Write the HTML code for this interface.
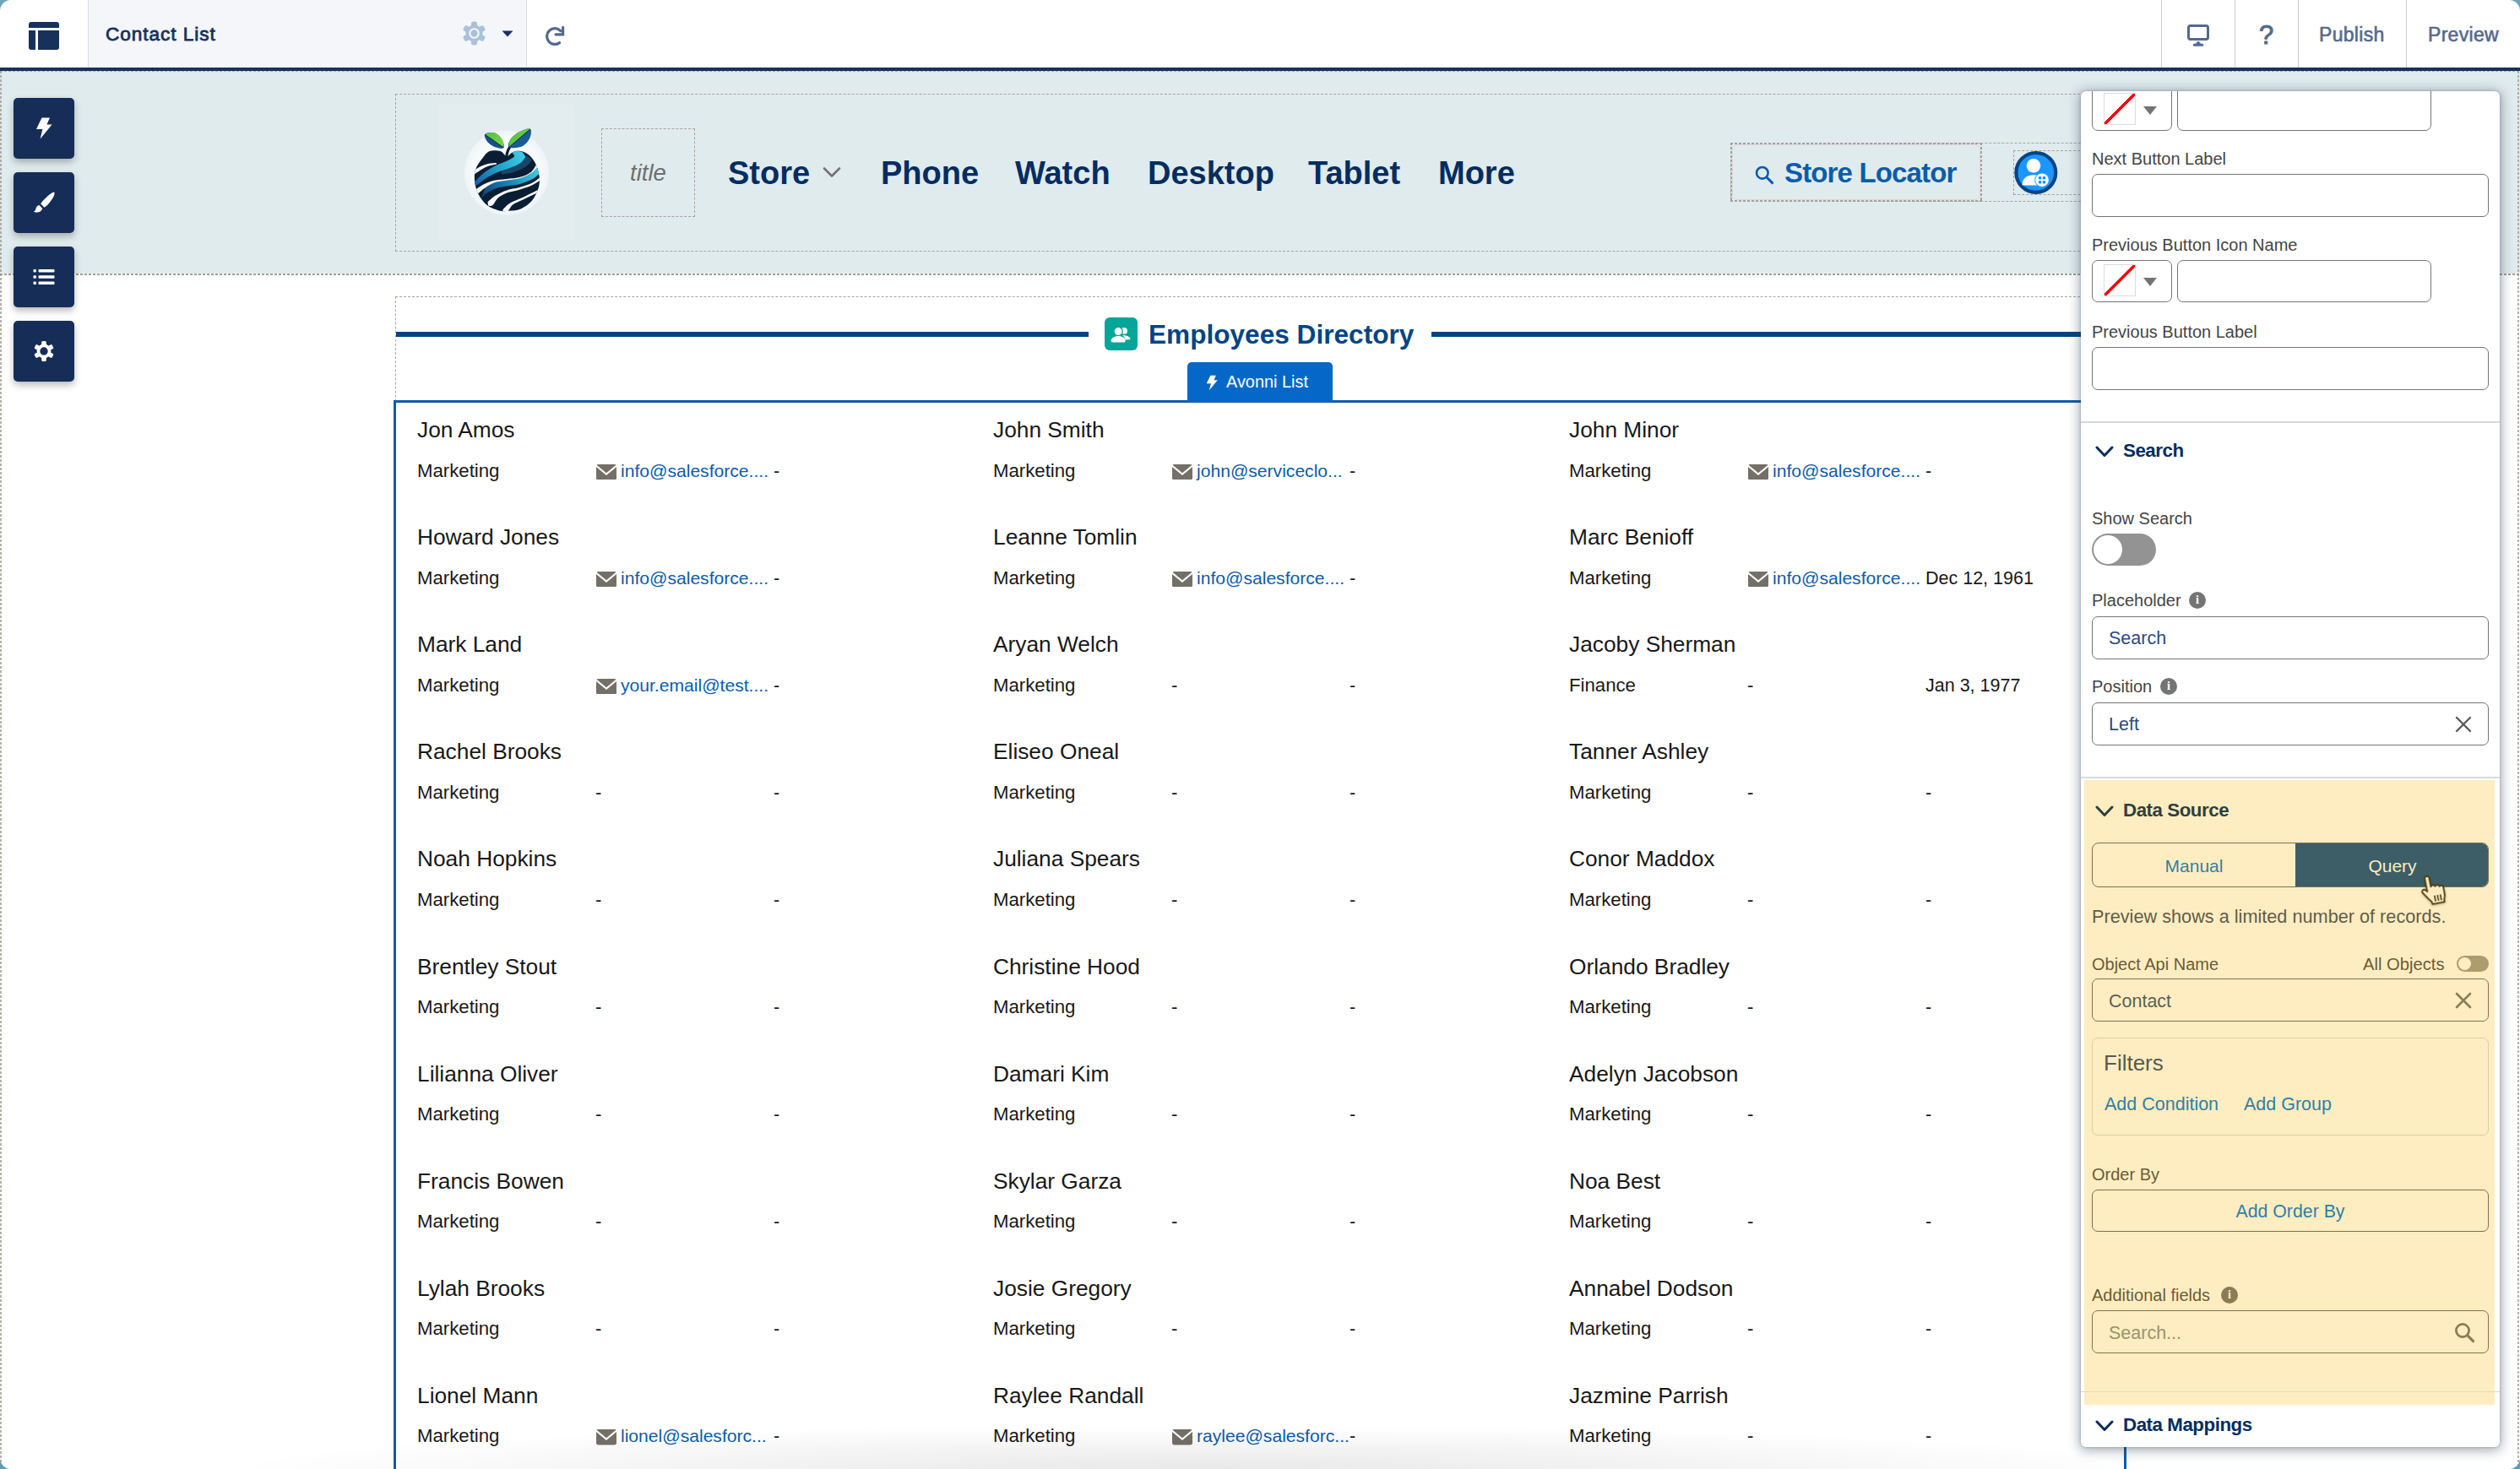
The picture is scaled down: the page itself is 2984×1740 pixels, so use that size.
<!DOCTYPE html>
<html lang="en">
<head>
<meta charset="utf-8">
<title>Contact List</title>
<style>
*{box-sizing:border-box;margin:0;padding:0}
html,body{width:2984px;height:1740px;overflow:hidden;background:#fff}
body{position:relative;font-family:"Liberation Sans",Arial,sans-serif;color:#181818}
.abs{position:absolute}
svg{display:block}
/* top bar */
#top{position:absolute;left:0;top:0;width:2984px;height:80px;background:#fff}
#topline{position:absolute;left:0;top:80px;width:2984px;height:4px;background:#16325c}
#top .cell{position:absolute;top:0;height:80px}
#ttl{left:104px;width:520px;background:#f4f6f9;border-left:1px solid #d8dde6;border-right:1px solid #d8dde6}
#ttl span{position:absolute;left:20px;top:1px;line-height:80px;font-size:22.600px;letter-spacing:.95px;color:#16325c;-webkit-text-stroke:.8px #16325c}
.tsep{position:absolute;top:0;width:1px;height:80px;background:#cbcbcb}
.tbtn{position:absolute;top:1px;line-height:80px;font-size:23px;letter-spacing:.3px;color:#54698d;-webkit-text-stroke:.6px #54698d}
/* band */
#band{position:absolute;left:0;top:84px;width:2984px;height:240px;background:#e0ebee}
.hd{position:absolute;height:2px;background:repeating-linear-gradient(to right,#a39d94 0 3px,transparent 3px 5px)}
.vd{position:absolute;opacity:.8;width:1.5px;background:repeating-linear-gradient(to bottom,#a39d94 0 3px,transparent 3px 5px)}
.dash{position:absolute;border:1px dashed #aaa39b}
.nav{position:absolute;top:0;font-weight:bold;font-size:38px;color:#032d60;line-height:46px;white-space:nowrap}
/* sidebar */
.sb{position:absolute;left:16px;width:72px;height:72px;border-radius:5px;background:#162d58;box-shadow:0 4px 8px rgba(0,0,0,.28)}
.sb svg{position:absolute}
/* list */
#list{position:absolute;left:466px;top:474px;width:2052px;height:1290px;border:3px solid #0b5cab;background:#fff}
.nm{position:absolute;font-size:26.3px;line-height:34px;color:#181818;white-space:nowrap}
.f{position:absolute;font-size:22.2px;line-height:30px;color:#181818;white-space:nowrap}
.f a{color:#0b5cab;text-decoration:none;font-size:21.1px}
.f svg{position:absolute;left:1px;top:7px}
.f.m a{position:absolute;left:30px;top:0}
.f.d{font-size:21.5px}
#panel{position:absolute;left:2464px;top:108px;width:496px;height:1606px;background:#fff;border-radius:6px;box-shadow:0 2px 14px 2px rgba(40,60,80,.42),0 0 3px rgba(40,60,80,.35);overflow:hidden}
#panel .lbl{position:absolute;left:13px;font-size:20px;line-height:24px;color:#444;white-space:nowrap}
#panel .inp{position:absolute;left:13px;width:470px;height:51px;border:1px solid #747474;border-radius:7px;background:#fff;font-size:21.500px;line-height:51px;padding-left:19px;color:#2e4a80;white-space:nowrap}
#panel .pick{position:absolute;left:13px;width:95px;height:50px;border:1px solid #747474;border-radius:7px;background:#fff}
#panel .pick i{position:absolute;left:12.500px;top:4px;width:38px;height:38px;border:1px solid #dcdcdc;background:linear-gradient(to bottom right,#fff calc(50% - 2px),#f00 calc(50% - 1.500px),#f00 calc(50% + 1.500px),#fff calc(50% + 2px))}
#panel .pick b{position:absolute;left:60px;top:19.500px;width:0;height:0;border-left:8.500px solid transparent;border-right:8.500px solid transparent;border-top:10px solid #747474}
#panel .hr{position:absolute;left:0;width:496px;height:1.500px;background:#d3d9e0}
#panel .sec{position:absolute;left:50px;font-weight:bold;font-size:22.300px;letter-spacing:-.45px;line-height:26px;color:#032d60;white-space:nowrap}
#panel .chev{position:absolute;left:17px}
#panel .info{position:absolute;width:20px;height:20px;border-radius:50%;background:#747474;color:#fff;font:bold 14px/20px "Liberation Serif",serif;text-align:center}
#ylw{position:absolute;left:4px;top:816px;width:486px;height:740px;background:#ffedc2}
#panel .y.lbl{color:#6b5c35}
#panel .y.inp{background:transparent;border-color:#7f7350;color:#5c5f52}
#panel .lnk{position:absolute;font-size:21.500px;line-height:26px;color:#3080a4;white-space:nowrap}
</style>
</head>
<body>
<!-- ===== TOP BAR ===== -->
<div id="top">
  <svg class="abs" style="left:34px;top:26px" width="36" height="33" viewBox="0 0 36 33"><path fill="#16325c" d="M3 0h30a3 3 0 0 1 3 3v4H0V3a3 3 0 0 1 3-3zM0 10h8v23H3a3 3 0 0 1-3-3zM11 10h25v20a3 3 0 0 1-3 3H11z"/></svg>
  <div id="ttl" class="cell"><span>Contact List</span>
    <svg class="abs" style="left:441.500px;top:25px" width="29" height="29" viewBox="-15 -15 30 30"><g fill="#abc1d9"><circle r="10.4"/><g id="tth"><rect x="-3.6" y="-14.4" width="7.2" height="7" rx="2.2"/></g><use href="#tth" transform="rotate(60)"/><use href="#tth" transform="rotate(120)"/><use href="#tth" transform="rotate(180)"/><use href="#tth" transform="rotate(240)"/><use href="#tth" transform="rotate(300)"/></g><circle r="5.4" fill="none" stroke="#f4f6f9" stroke-width="2.2"/></svg>
    <svg class="abs" style="left:489px;top:36px" width="14" height="8" viewBox="0 0 14 8"><path fill="#16325c" d="M0.5 0.6h13L7 7.4z"/></svg>
  </div>
  <svg class="abs" style="left:644px;top:30px" width="26" height="26" viewBox="0 0 26 26"><path fill="none" stroke="#54698d" stroke-width="3.2" stroke-linecap="round" d="M18.6 20.6A9.4 9.4 0 1 1 19.8 6.6"/><path fill="none" stroke="#54698d" stroke-width="3.2" stroke-linecap="round" stroke-linejoin="miter" d="M22.6 2.4v8.4h-8.6"/></svg>
  <div class="tsep" style="left:2559px"></div>
  <div class="tsep" style="left:2646px"></div>
  <div class="tsep" style="left:2721px"></div>
  <div class="tsep" style="left:2849px"></div>
  <svg class="abs" style="left:2589px;top:28px" width="28" height="28" viewBox="0 0 28 28"><rect x="2.500" y="2.500" width="23" height="16" rx="2.200" fill="none" stroke="#54698d" stroke-width="3"/><path fill="#54698d" d="M14 20.500l3.200 3.200h1.600a1.500 1.500 0 0 1 0 3H9.200a1.500 1.500 0 0 1 0-3h1.600z"/></svg>
  <div class="tbtn" style="left:2675px;top:2px;font-size:31px;letter-spacing:0;-webkit-text-stroke:1px #54698d">?</div>
  <div class="tbtn" style="left:2746px">Publish</div>
  <div class="tbtn" style="left:2875px">Preview</div>
</div>
<div id="topline"></div>
<div class="abs" style="left:0;top:0;width:13px;height:13px;background:radial-gradient(circle at 13px 13px,rgba(111,165,184,0) 12.500px,#6fa5b8 13.500px)"></div>
<div class="abs" style="left:2971px;top:0;width:13px;height:13px;background:radial-gradient(circle at 0 13px,rgba(111,165,184,0) 12.500px,#6fa5b8 13.500px)"></div>
<div class="abs" style="left:0;top:1727px;width:13px;height:13px;z-index:9;background:radial-gradient(circle at 13px 0,rgba(111,165,184,0) 12.500px,#5f9ab0 13.500px)"></div>
<div class="abs" style="left:2971px;top:1727px;width:13px;height:13px;z-index:9;background:radial-gradient(circle at 0 0,rgba(111,165,184,0) 12.500px,#5f9ab0 13.500px)"></div>

<!-- ===== HEADER BAND ===== -->
<div id="band"></div>
<div class="hd" style="left:0;top:324px;width:2984px"></div>
<div class="hd" style="left:0;top:84px;width:2984px;height:1px;opacity:.8"></div>
<div class="vd" style="left:0;top:84px;height:1656px"></div>
<div class="vd" style="left:2981px;top:84px;height:1656px"></div>
<div class="dash" style="left:468px;top:111px;width:2050px;height:187px"></div>
<div class="abs" style="left:520px;top:124px;width:160px;height:160px;background:#e3edf0"></div>
<svg class="abs" style="left:510px;top:115px" width="180" height="180" viewBox="0 0 180 180">
<defs><radialGradient id="glow"><stop offset="0" stop-color="#ffffff"/><stop offset=".82" stop-color="#f5fafc"/><stop offset="1" stop-color="#eef5f7"/></radialGradient>
<clipPath id="apc"><path d="M89.91 70.04C87.66 69.73 85.80 65.06 82.43 64.06C79.06 63.06 73.26 62.63 69.7 64.06C66.14 65.49 63.84 69.10 61.09 72.66C58.34 76.22 54.73 80.90 53.23 85.39C51.73 89.88 51.61 94.75 52.11 99.61C52.61 104.47 53.80 109.84 56.23 114.58C58.66 119.32 62.59 124.74 66.71 128.05C70.83 131.36 76.56 133.30 80.93 134.42C85.30 135.54 88.53 135.16 92.9 134.79C97.27 134.41 102.64 134.17 107.13 132.17C111.62 130.17 116.48 126.74 119.85 122.81C123.22 118.88 125.84 113.08 127.34 108.59C128.84 104.10 129.14 100.36 128.83 95.87C128.52 91.38 127.08 85.77 125.46 81.65C123.84 77.53 121.53 73.92 119.1 71.17C116.67 68.42 113.74 66.43 110.87 65.18C108.00 63.93 104.39 63.55 101.89 63.68C99.39 63.80 97.90 64.87 95.9 65.93C93.90 66.99 92.16 70.35 89.91 70.04Z"/></clipPath>
<linearGradient id="bl" gradientUnits="userSpaceOnUse" x1="52" y1="105" x2="112" y2="66"><stop offset="0" stop-color="#185a9e"/><stop offset=".45" stop-color="#1f9cc8"/><stop offset="1" stop-color="#3fd2e6"/></linearGradient>
<linearGradient id="bl2" gradientUnits="userSpaceOnUse" x1="60" y1="118" x2="128" y2="86"><stop offset="0" stop-color="#0f3f78"/><stop offset=".5" stop-color="#1a86b8"/><stop offset="1" stop-color="#35cfe4"/></linearGradient>
<linearGradient id="lfg" x1="0" y1="0" x2="1" y2="1"><stop offset="0" stop-color="#49b848"/><stop offset="1" stop-color="#7ad640"/></linearGradient>
<clipPath id="lLc"><path d="M64.09 44.22C65.34 42.41 71.63 41.48 74.94 42.35C78.25 43.22 81.99 46.53 83.92 49.46C85.85 52.39 87.79 58.32 86.54 59.94C85.29 61.56 79.62 60.31 76.44 59.19C73.26 58.07 69.52 55.70 67.46 53.2C65.40 50.71 62.84 46.03 64.09 44.22Z"/></clipPath><clipPath id="lRc"><path d="M117.98 37.86C119.98 39.23 118.67 45.97 116.86 49.46C115.05 52.95 111.12 57.20 107.13 58.82C103.14 60.44 95.02 60.62 92.9 59.19C90.78 57.75 92.40 53.20 94.4 50.21C96.40 47.22 100.95 43.29 104.88 41.23C108.81 39.17 115.98 36.49 117.98 37.86Z"/></clipPath></defs>
<circle cx="90" cy="89.5" r="50" fill="url(#glow)"/>
<g clip-path="url(#apc)"><rect x="40" y="50" width="100" height="100" fill="#0a1e33"/>
<path d="M83.92 82.4C86.17 81.65 93.16 79.65 97.4 77.9C101.64 76.15 106.50 73.42 109.37 71.92C112.24 70.42 113.74 69.42 114.61 68.92L119.85 74.91C118.60 76.16 116.11 80.03 112.37 82.4C108.63 84.77 102.14 87.63 97.4 89.13C92.66 90.63 86.17 91.00 83.92 91.38Z" fill="#1d4f78" opacity=".8"/>
<path d="M52.11 99.99C54.04 98.18 59.53 92.31 63.71 89.13C67.89 85.95 72.82 83.15 77.19 80.9C81.56 78.66 86.29 77.41 89.91 75.66C93.53 73.91 97.77 72.11 98.89 70.42C100.01 68.73 96.15 66.65 96.65 65.55C97.15 64.45 99.89 63.89 101.89 63.83C103.89 63.77 107.50 64.96 108.62 65.18L112.37 70.42C111.37 71.67 109.50 75.66 106.38 77.9C103.26 80.15 98.27 82.02 93.65 83.89C89.03 85.76 83.30 87.13 78.68 89.13C74.06 91.13 69.70 93.50 65.96 95.87C62.22 98.24 58.54 101.85 56.23 103.35C53.92 104.85 52.80 104.60 52.11 104.85Z" fill="url(#bl)"/>
<path d="M50.99 86.89C52.49 86.02 56.98 83.02 59.97 81.65C62.96 80.28 65.96 79.28 68.95 78.65C71.94 78.03 76.43 78.03 77.93 77.9L77.93 79.4C76.56 79.71 72.44 80.33 69.7 81.27C66.96 82.20 64.46 83.33 61.47 85.01C58.48 86.70 53.36 90.32 51.74 91.38Z" fill="#f7fbfc"/>
<path d="M64.46 107.47C66.46 106.41 72.20 102.57 76.44 101.11C80.68 99.65 85.17 99.48 89.91 98.71C94.65 97.94 100.02 97.88 104.88 96.47C109.74 95.06 115.42 92.59 119.1 90.25C122.78 87.91 125.65 83.71 126.96 82.4L128.83 90.63C127.33 91.75 123.84 95.25 119.85 97.37C115.86 99.49 109.87 101.98 104.88 103.35C99.89 104.72 94.28 104.85 89.91 105.6C85.54 106.35 82.42 106.59 78.68 107.84C74.94 109.09 70.58 111.08 67.46 113.08C64.34 115.08 61.22 118.70 59.97 119.82Z" fill="url(#bl2)"/>
<path d="M50.99 111.59C52.74 110.34 57.48 106.22 61.47 104.1C65.46 101.98 70.20 100.05 74.94 98.86C79.68 97.67 84.92 97.61 89.91 96.99C94.90 96.37 100.14 96.43 104.88 95.12C109.62 93.81 114.92 91.75 118.35 89.13C121.78 86.51 124.27 81.02 125.46 79.4L126.96 82.4C125.65 83.71 122.78 87.91 119.1 90.25C115.42 92.59 109.74 95.06 104.88 96.47C100.02 97.88 94.65 97.94 89.91 98.71C85.17 99.48 80.68 99.65 76.44 101.11C72.20 102.57 68.33 104.85 64.46 107.47C60.59 110.09 55.10 115.27 53.23 116.83Z" fill="#f7fbfc"/>
<path d="M67.46 124.31C68.96 123.06 72.70 119.14 76.44 116.83C80.18 114.52 85.17 112.08 89.91 110.46C94.65 108.84 99.89 108.53 104.88 107.1C109.87 105.67 115.73 103.86 119.85 101.86C123.97 99.86 127.96 96.24 129.58 95.12L129.96 98.49C128.28 99.49 124.03 102.61 119.85 104.48C115.67 106.35 109.62 108.29 104.88 109.72C100.14 111.15 95.53 111.52 91.41 113.08C87.29 114.64 83.18 116.57 80.18 119.07C77.19 121.56 75.44 126.43 73.44 128.05C71.44 129.67 69.07 128.68 68.2 128.8Z" fill="#f7fbfc"/>
<path d="M85.42 133.29C86.79 132.04 89.78 128.18 93.65 125.81C97.52 123.44 103.01 121.75 108.62 119.07C114.23 116.39 124.22 111.28 127.34 109.72L127.34 112.71C124.34 114.17 114.36 119.04 109.37 121.47C104.38 123.90 100.52 124.84 97.4 127.31C94.28 129.78 92.66 134.79 90.66 136.29C88.66 137.79 86.29 136.29 85.42 136.29Z" fill="#f7fbfc"/>
</g>
<path d="M89.91 69.67Q90.66 62.19 96.65 55.07" fill="none" stroke="#0a1e33" stroke-width="3.2" stroke-linecap="round"/>
<g clip-path="url(#lLc)"><rect x="60" y="35" width="40" height="30" fill="#17508a"/><path d="M64.09 44.22L86.54 59.94L86.54 30L64.09 30Z" fill="url(#lfg)"/><path d="M64.09 44.22L86.54 59.94" stroke="#0a1e33" stroke-width=".9"/></g>
<g clip-path="url(#lRc)"><rect x="90" y="35" width="35" height="30" fill="#1a5a95"/><path d="M117.98 37.86L92.9 59.19L92.9 30Z" fill="url(#lfg)"/><path d="M117.98 37.86L92.9 59.19" stroke="#0a1e33" stroke-width=".9"/></g>
</svg>
<div class="dash" style="left:712px;top:152px;width:111px;height:105px"></div>
<div class="abs" style="left:712px;top:152px;width:111px;height:105px;line-height:105px;text-align:center;font-style:italic;font-size:27.500px;color:#706e6b">title</div>
<div class="nav" style="left:862px;top:182px">Store</div>
<svg class="abs" style="left:974px;top:197px" width="22" height="14" viewBox="0 0 22 14"><path d="M2 2.500l9 9 9-9" fill="none" stroke="#747474" stroke-width="2.600" stroke-linecap="round" stroke-linejoin="round"/></svg>
<div class="nav" style="left:1043px;top:182px">Phone</div>
<div class="nav" style="left:1202px;top:182px">Watch</div>
<div class="nav" style="left:1359px;top:182px">Desktop</div>
<div class="nav" style="left:1549px;top:182px">Tablet</div>
<div class="nav" style="left:1703px;top:182px">More</div>
<div class="dash" style="left:2049px;top:169px;width:470px;height:70px"></div>
<div class="abs" style="left:2049px;top:169px;width:298px;height:70px;background:repeating-linear-gradient(to right,#a8a199 0 3px,transparent 3px 5px) top/100% 2px no-repeat,repeating-linear-gradient(to right,#a8a199 0 3px,transparent 3px 5px) bottom/100% 2px no-repeat,repeating-linear-gradient(to bottom,#a8a199 0 3px,transparent 3px 5px) left/2px 100% no-repeat,repeating-linear-gradient(to bottom,#a8a199 0 3px,transparent 3px 5px) right/2px 100% no-repeat"></div>
<div class="abs" style="left:2051px;top:171px;width:294px;height:66px;border:1px solid #dcd6d5;border-radius:7px"></div>
<div class="dash" style="left:2384px;top:178px;width:120px;height:53px"></div>
<svg class="abs" style="left:2078px;top:196px" width="24" height="24" viewBox="0 0 24 24"><circle cx="8.800" cy="8.800" r="6.800" fill="none" stroke="#0b5cab" stroke-width="2.600"/><path d="M13.800 13.800l6.800 6.800" stroke="#0b5cab" stroke-width="3" stroke-linecap="round"/></svg>
<div class="abs" style="left:2113px;top:185px;font-weight:bold;font-size:33px;letter-spacing:-.85px;line-height:40px;color:#0b5cab;white-space:nowrap">Store Locator</div>
<svg class="abs" style="left:2384px;top:178px" width="54" height="54" viewBox="0 0 54 54"><circle cx="26.800" cy="26.400" r="23.400" fill="#1b96ff" stroke="#014486" stroke-width="4.200"/><circle cx="24" cy="18.300" r="8.300" fill="#fff"/><path d="M10.500 41.500c0-8.500 5.500-12.300 13.500-12.300 4 0 7.500 1 10 3v9.300z" fill="#fff"/><circle cx="34" cy="35.200" r="8.300" fill="#fff" stroke="#1b96ff" stroke-width="1"/><g fill="#1b96ff"><rect x="29.800" y="31" width="3.500" height="3.500" rx="1"/><rect x="34.700" y="31" width="3.500" height="3.500" rx="1"/><rect x="29.800" y="35.900" width="3.500" height="3.500" rx="1"/><rect x="34.700" y="35.900" width="3.500" height="3.500" rx="1"/></g></svg>

<!-- ===== SIDEBAR ===== -->
<div class="sb" style="top:116px"><svg style="left:26px;top:23px" width="20" height="26" viewBox="0 0 20 26"><path fill="#fff" d="M7.500 0.500h9.500l-3.600 8h6.200L5.600 25.500 8.400 14H1z"/></svg></div>
<div class="sb" style="top:204px"><svg style="left:22px;top:22px" width="28" height="28" viewBox="0 0 28 28"><path fill="#fff" d="M26 1.600c1 .8.600 3-.600 5.400C22.600 12.400 17 18.600 14.600 19.800l-4.400-4.400C12.600 11.600 19 5 24.400 2c.7-.400 1.200-.600 1.600-.400zM8.400 17l3.800 3.800c-.4 2.600-2.600 4.600-5.600 4.800-1.800.2-3.800-.2-5-.8 1.600-.6 2.400-1.400 2.800-3.200.4-2.200 1.800-4.200 4-4.600z"/></svg></div>
<div class="sb" style="top:292px"><svg style="left:23px;top:26px" width="26" height="20" viewBox="0 0 26 20"><g fill="#fff"><rect x="0.500" y="1" width="3.400" height="3.400" rx=".8"/><rect x="6.500" y="1" width="19" height="3.400" rx=".8"/><rect x="0.500" y="8.300" width="3.400" height="3.400" rx=".8"/><rect x="6.500" y="8.300" width="19" height="3.400" rx=".8"/><rect x="0.500" y="15.600" width="3.400" height="3.400" rx=".8"/><rect x="6.500" y="15.600" width="19" height="3.400" rx=".8"/></g></svg></div>
<div class="sb" style="top:380px"><svg style="left:23px;top:23px" width="26" height="26" viewBox="-13 -13 26 26"><g fill="#fff"><circle r="8.400"/><g id="tt2"><rect x="-2.800" y="-12" width="5.600" height="6" rx="1.600"/></g><use href="#tt2" transform="rotate(60)"/><use href="#tt2" transform="rotate(120)"/><use href="#tt2" transform="rotate(180)"/><use href="#tt2" transform="rotate(240)"/><use href="#tt2" transform="rotate(300)"/></g><circle r="4.700" fill="#162d58"/></svg></div>
<!-- ===== CONTENT ===== -->
<div class="dash" style="left:468px;top:351px;width:2050px;height:130px;border-bottom:0"></div>
<div class="abs" style="left:469px;top:393px;width:820px;height:6px;background:#014486"></div>
<div class="abs" style="left:1695px;top:393px;width:822px;height:6px;background:#014486"></div>
<div class="abs" style="left:1308px;top:376px;width:39px;height:39px;border-radius:6px;background:#06a59a">
  <svg class="abs" style="left:7px;top:9.500px" width="25" height="21" viewBox="0 0 27 23"><g fill="#fff"><circle cx="17.500" cy="6.500" r="4.200" opacity=".95"/><path d="M17 12c3 .5 6.500 1.500 8 3.200.8 1 .6 2.600-.800 2.600H19c-.5-2.500-1.800-4.200-3.500-5.200z"/><circle cx="9.800" cy="7.200" r="5.600" stroke="#06a59a" stroke-width="1.400"/><path d="M9.800 13.200c4.200 0 8 2 9.200 4.800.6 1.600-.2 3.400-2 3.400H2.600c-1.800 0-2.600-1.800-2-3.400 1.200-2.800 5-4.800 9.200-4.800z"/></g></svg>
</div>
<div class="abs" style="left:1360px;top:375px;font-weight:bold;font-size:31.600px;line-height:42px;color:#014486;white-space:nowrap">Employees Directory</div>
<div class="abs" style="left:1406px;top:429px;z-index:3;width:172px;height:47px;border-radius:5px 5px 0 0;background:#0568c8">
  <svg class="abs" style="left:22px;top:15px" width="14" height="19" viewBox="0 0 20 26"><path fill="#fff" d="M7.500 0.500h9.500l-3.600 8h6.200L5.600 25.500 8.400 14H1z"/></svg>
  <div class="abs" style="left:46px;top:10px;font-size:19.900px;line-height:26px;color:#fff;white-space:nowrap">Avonni List</div>
</div>
<div id="list">
<div class="nm" style="left:25px;top:15.0px">Jon Amos</div>
<div class="f" style="left:25px;top:65.5px">Marketing</div>
<div class="f m" style="left:236px;top:65.5px"><svg width="24" height="18.500" viewBox="0 0 25 19" preserveAspectRatio="none"><path fill="#747068" d="M2.200 0h20.600c.700 0 1.300.300 1.700.800L12.500 10.600.500.800C.900.300 1.500 0 2.200 0zM0 3.200l12.500 10.200L25 3.200v13.600a2.200 2.200 0 0 1-2.200 2.200H2.200A2.200 2.200 0 0 1 0 16.800z"/></svg><a>info@salesforce....</a></div>
<div class="f d" style="left:447px;top:65.5px">-</div>
<div class="nm" style="left:25px;top:142.1px">Howard Jones</div>
<div class="f" style="left:25px;top:192.6px">Marketing</div>
<div class="f m" style="left:236px;top:192.6px"><svg width="24" height="18.500" viewBox="0 0 25 19" preserveAspectRatio="none"><path fill="#747068" d="M2.200 0h20.600c.700 0 1.300.300 1.700.800L12.500 10.600.500.800C.900.300 1.500 0 2.200 0zM0 3.200l12.500 10.200L25 3.200v13.600a2.200 2.200 0 0 1-2.200 2.200H2.200A2.200 2.200 0 0 1 0 16.800z"/></svg><a>info@salesforce....</a></div>
<div class="f d" style="left:447px;top:192.6px">-</div>
<div class="nm" style="left:25px;top:269.2px">Mark Land</div>
<div class="f" style="left:25px;top:319.7px">Marketing</div>
<div class="f m" style="left:236px;top:319.7px"><svg width="24" height="18.500" viewBox="0 0 25 19" preserveAspectRatio="none"><path fill="#747068" d="M2.200 0h20.600c.700 0 1.300.300 1.700.800L12.500 10.600.500.800C.900.300 1.500 0 2.200 0zM0 3.200l12.500 10.200L25 3.200v13.600a2.200 2.200 0 0 1-2.200 2.200H2.200A2.200 2.200 0 0 1 0 16.800z"/></svg><a>your.email@test....</a></div>
<div class="f d" style="left:447px;top:319.7px">-</div>
<div class="nm" style="left:25px;top:396.3px">Rachel Brooks</div>
<div class="f" style="left:25px;top:446.8px">Marketing</div>
<div class="f" style="left:236px;top:446.8px">-</div>
<div class="f d" style="left:447px;top:446.8px">-</div>
<div class="nm" style="left:25px;top:523.4px">Noah Hopkins</div>
<div class="f" style="left:25px;top:573.9px">Marketing</div>
<div class="f" style="left:236px;top:573.9px">-</div>
<div class="f d" style="left:447px;top:573.9px">-</div>
<div class="nm" style="left:25px;top:650.5px">Brentley Stout</div>
<div class="f" style="left:25px;top:701.0px">Marketing</div>
<div class="f" style="left:236px;top:701.0px">-</div>
<div class="f d" style="left:447px;top:701.0px">-</div>
<div class="nm" style="left:25px;top:777.6px">Lilianna Oliver</div>
<div class="f" style="left:25px;top:828.1px">Marketing</div>
<div class="f" style="left:236px;top:828.1px">-</div>
<div class="f d" style="left:447px;top:828.1px">-</div>
<div class="nm" style="left:25px;top:904.7px">Francis Bowen</div>
<div class="f" style="left:25px;top:955.2px">Marketing</div>
<div class="f" style="left:236px;top:955.2px">-</div>
<div class="f d" style="left:447px;top:955.2px">-</div>
<div class="nm" style="left:25px;top:1031.8px">Lylah Brooks</div>
<div class="f" style="left:25px;top:1082.3px">Marketing</div>
<div class="f" style="left:236px;top:1082.3px">-</div>
<div class="f d" style="left:447px;top:1082.3px">-</div>
<div class="nm" style="left:25px;top:1158.9px">Lionel Mann</div>
<div class="f" style="left:25px;top:1209.4px">Marketing</div>
<div class="f m" style="left:236px;top:1209.4px"><svg width="24" height="18.500" viewBox="0 0 25 19" preserveAspectRatio="none"><path fill="#747068" d="M2.200 0h20.600c.700 0 1.300.300 1.700.800L12.500 10.600.500.800C.900.300 1.500 0 2.200 0zM0 3.200l12.500 10.200L25 3.200v13.600a2.200 2.200 0 0 1-2.200 2.200H2.200A2.200 2.200 0 0 1 0 16.800z"/></svg><a>lionel@salesforc...</a></div>
<div class="f d" style="left:447px;top:1209.4px">-</div>
<div class="nm" style="left:707px;top:15.0px">John Smith</div>
<div class="f" style="left:707px;top:65.5px">Marketing</div>
<div class="f m" style="left:918px;top:65.5px"><svg width="24" height="18.500" viewBox="0 0 25 19" preserveAspectRatio="none"><path fill="#747068" d="M2.200 0h20.600c.700 0 1.300.300 1.700.800L12.500 10.600.500.800C.900.300 1.500 0 2.200 0zM0 3.200l12.500 10.200L25 3.200v13.600a2.200 2.200 0 0 1-2.200 2.200H2.200A2.200 2.200 0 0 1 0 16.800z"/></svg><a>john@serviceclo...</a></div>
<div class="f d" style="left:1129px;top:65.5px">-</div>
<div class="nm" style="left:707px;top:142.1px">Leanne Tomlin</div>
<div class="f" style="left:707px;top:192.6px">Marketing</div>
<div class="f m" style="left:918px;top:192.6px"><svg width="24" height="18.500" viewBox="0 0 25 19" preserveAspectRatio="none"><path fill="#747068" d="M2.200 0h20.600c.700 0 1.300.300 1.700.800L12.500 10.600.500.800C.900.300 1.500 0 2.200 0zM0 3.200l12.500 10.200L25 3.200v13.600a2.200 2.200 0 0 1-2.200 2.200H2.200A2.200 2.200 0 0 1 0 16.800z"/></svg><a>info@salesforce....</a></div>
<div class="f d" style="left:1129px;top:192.6px">-</div>
<div class="nm" style="left:707px;top:269.2px">Aryan Welch</div>
<div class="f" style="left:707px;top:319.7px">Marketing</div>
<div class="f" style="left:918px;top:319.7px">-</div>
<div class="f d" style="left:1129px;top:319.7px">-</div>
<div class="nm" style="left:707px;top:396.3px">Eliseo Oneal</div>
<div class="f" style="left:707px;top:446.8px">Marketing</div>
<div class="f" style="left:918px;top:446.8px">-</div>
<div class="f d" style="left:1129px;top:446.8px">-</div>
<div class="nm" style="left:707px;top:523.4px">Juliana Spears</div>
<div class="f" style="left:707px;top:573.9px">Marketing</div>
<div class="f" style="left:918px;top:573.9px">-</div>
<div class="f d" style="left:1129px;top:573.9px">-</div>
<div class="nm" style="left:707px;top:650.5px">Christine Hood</div>
<div class="f" style="left:707px;top:701.0px">Marketing</div>
<div class="f" style="left:918px;top:701.0px">-</div>
<div class="f d" style="left:1129px;top:701.0px">-</div>
<div class="nm" style="left:707px;top:777.6px">Damari Kim</div>
<div class="f" style="left:707px;top:828.1px">Marketing</div>
<div class="f" style="left:918px;top:828.1px">-</div>
<div class="f d" style="left:1129px;top:828.1px">-</div>
<div class="nm" style="left:707px;top:904.7px">Skylar Garza</div>
<div class="f" style="left:707px;top:955.2px">Marketing</div>
<div class="f" style="left:918px;top:955.2px">-</div>
<div class="f d" style="left:1129px;top:955.2px">-</div>
<div class="nm" style="left:707px;top:1031.8px">Josie Gregory</div>
<div class="f" style="left:707px;top:1082.3px">Marketing</div>
<div class="f" style="left:918px;top:1082.3px">-</div>
<div class="f d" style="left:1129px;top:1082.3px">-</div>
<div class="nm" style="left:707px;top:1158.9px">Raylee Randall</div>
<div class="f" style="left:707px;top:1209.4px">Marketing</div>
<div class="f m" style="left:918px;top:1209.4px"><svg width="24" height="18.500" viewBox="0 0 25 19" preserveAspectRatio="none"><path fill="#747068" d="M2.200 0h20.600c.700 0 1.300.300 1.700.800L12.500 10.600.500.800C.900.300 1.500 0 2.200 0zM0 3.200l12.500 10.200L25 3.200v13.600a2.200 2.200 0 0 1-2.200 2.200H2.200A2.200 2.200 0 0 1 0 16.800z"/></svg><a>raylee@salesforc...</a></div>
<div class="f d" style="left:1129px;top:1209.4px">-</div>
<div class="nm" style="left:1389px;top:15.0px">John Minor</div>
<div class="f" style="left:1389px;top:65.5px">Marketing</div>
<div class="f m" style="left:1600px;top:65.5px"><svg width="24" height="18.500" viewBox="0 0 25 19" preserveAspectRatio="none"><path fill="#747068" d="M2.200 0h20.600c.700 0 1.300.300 1.700.800L12.500 10.600.500.800C.900.300 1.500 0 2.200 0zM0 3.200l12.500 10.200L25 3.200v13.600a2.200 2.200 0 0 1-2.200 2.200H2.200A2.200 2.200 0 0 1 0 16.800z"/></svg><a>info@salesforce....</a></div>
<div class="f d" style="left:1811px;top:65.5px">-</div>
<div class="nm" style="left:1389px;top:142.1px">Marc Benioff</div>
<div class="f" style="left:1389px;top:192.6px">Marketing</div>
<div class="f m" style="left:1600px;top:192.6px"><svg width="24" height="18.500" viewBox="0 0 25 19" preserveAspectRatio="none"><path fill="#747068" d="M2.200 0h20.600c.700 0 1.300.300 1.700.800L12.500 10.600.500.800C.900.300 1.500 0 2.200 0zM0 3.200l12.500 10.200L25 3.200v13.600a2.200 2.200 0 0 1-2.200 2.200H2.200A2.200 2.200 0 0 1 0 16.800z"/></svg><a>info@salesforce....</a></div>
<div class="f d" style="left:1811px;top:192.6px">Dec 12, 1961</div>
<div class="nm" style="left:1389px;top:269.2px">Jacoby Sherman</div>
<div class="f" style="left:1389px;top:319.7px">Finance</div>
<div class="f" style="left:1600px;top:319.7px">-</div>
<div class="f d" style="left:1811px;top:319.7px">Jan 3, 1977</div>
<div class="nm" style="left:1389px;top:396.3px">Tanner Ashley</div>
<div class="f" style="left:1389px;top:446.8px">Marketing</div>
<div class="f" style="left:1600px;top:446.8px">-</div>
<div class="f d" style="left:1811px;top:446.8px">-</div>
<div class="nm" style="left:1389px;top:523.4px">Conor Maddox</div>
<div class="f" style="left:1389px;top:573.9px">Marketing</div>
<div class="f" style="left:1600px;top:573.9px">-</div>
<div class="f d" style="left:1811px;top:573.9px">-</div>
<div class="nm" style="left:1389px;top:650.5px">Orlando Bradley</div>
<div class="f" style="left:1389px;top:701.0px">Marketing</div>
<div class="f" style="left:1600px;top:701.0px">-</div>
<div class="f d" style="left:1811px;top:701.0px">-</div>
<div class="nm" style="left:1389px;top:777.6px">Adelyn Jacobson</div>
<div class="f" style="left:1389px;top:828.1px">Marketing</div>
<div class="f" style="left:1600px;top:828.1px">-</div>
<div class="f d" style="left:1811px;top:828.1px">-</div>
<div class="nm" style="left:1389px;top:904.7px">Noa Best</div>
<div class="f" style="left:1389px;top:955.2px">Marketing</div>
<div class="f" style="left:1600px;top:955.2px">-</div>
<div class="f d" style="left:1811px;top:955.2px">-</div>
<div class="nm" style="left:1389px;top:1031.8px">Annabel Dodson</div>
<div class="f" style="left:1389px;top:1082.3px">Marketing</div>
<div class="f" style="left:1600px;top:1082.3px">-</div>
<div class="f d" style="left:1811px;top:1082.3px">-</div>
<div class="nm" style="left:1389px;top:1158.9px">Jazmine Parrish</div>
<div class="f" style="left:1389px;top:1209.4px">Marketing</div>
<div class="f" style="left:1600px;top:1209.4px">-</div>
<div class="f d" style="left:1811px;top:1209.4px">-</div>
</div>
<!-- bottom fade -->
<div class="abs" style="left:0;top:1690px;width:2984px;height:50px;background:radial-gradient(ellipse 1150px 52px at 1420px 100%,rgba(0,0,0,.09),rgba(0,0,0,0))"></div>
<!-- ===== PROPERTY PANEL ===== -->
<div id="panel">
  <div class="pick" style="top:-10px;height:57px"><i style="top:11px"></i><b style="top:26.500px"></b></div>
  <div class="inp" style="left:114px;top:-10px;width:301px;height:57px"></div>
  <div class="lbl" style="top:68px">Next Button Label</div>
  <div class="inp" style="top:98px"></div>
  <div class="lbl" style="top:170px">Previous Button Icon Name</div>
  <div class="pick" style="top:200px"><i></i><b></b></div>
  <div class="inp" style="left:114px;top:200px;width:301px;height:50px"></div>
  <div class="lbl" style="top:273px">Previous Button Label</div>
  <div class="inp" style="top:303px"></div>
  <div class="hr" style="top:391px"></div>

  <svg class="chev" style="top:420px" width="22" height="14" viewBox="0 0 22 14"><path d="M2 2l9 9.500L20 2" fill="none" stroke="#032d60" stroke-width="3" stroke-linecap="round" stroke-linejoin="round"/></svg>
  <div class="sec" style="top:413px">Search</div>
  <div class="lbl" style="top:494px">Show Search</div>
  <div class="abs" style="left:13px;top:524px;width:76px;height:38px;border-radius:19px;background:#939393"><div class="abs" style="left:2px;top:2px;width:34px;height:34px;border-radius:50%;background:#fff"></div></div>
  <div class="lbl" style="top:591px">Placeholder</div>
  <div class="info" style="left:128px;top:593px">i</div>
  <div class="inp" style="top:622px">Search</div>
  <div class="lbl" style="top:693px">Position</div>
  <div class="info" style="left:94px;top:695px">i</div>
  <div class="inp" style="top:724px">Left</div>
  <svg class="abs" style="left:443px;top:740px" width="20" height="20" viewBox="0 0 20 20"><path d="M2 2l16 16M18 2L2 18" stroke="#5a5a5a" stroke-width="2.400" stroke-linecap="round"/></svg>
  <div class="hr" style="top:812px"></div>

  <div id="ylw"></div>
  <svg class="chev" style="top:846px" width="22" height="14" viewBox="0 0 22 14"><path d="M2 2l9 9.500L20 2" fill="none" stroke="#2f3f3d" stroke-width="3" stroke-linecap="round" stroke-linejoin="round"/></svg>
  <div class="sec" style="top:839px;color:#2f3f3d">Data Source</div>
  <div class="abs" style="left:13px;top:890px;width:470px;height:53px;border:1px solid #7b7051;border-radius:8px;overflow:hidden">
    <div class="abs" style="left:0;top:0;width:240px;height:51px;text-align:center;font-size:21px;line-height:54px;color:#3080a4">Manual</div>
    <div class="abs" style="left:240px;top:0;width:230px;height:51px;background:#3d5e66;text-align:center;font-size:21px;line-height:54px;color:#ffedc2">Query</div>
  </div>
  <div class="lbl y" style="top:965px;font-size:21.700px;line-height:26px;color:#5f5d49">Preview shows a limited number of records.</div>
  <div class="lbl y" style="top:1022px">Object Api Name</div>
  <div class="lbl y" style="left:334px;top:1022px;font-size:20.200px">All Objects</div>
  <div class="abs" style="left:445px;top:1024px;width:38px;height:19px;border-radius:10px;background:#ad9c6d"><div class="abs" style="left:2px;top:2px;width:15px;height:15px;border-radius:50%;background:#ffedc2"></div></div>
  <div class="inp y" style="top:1051px;line-height:52px">Contact</div>
  <svg class="abs" style="left:443px;top:1067px" width="20" height="20" viewBox="0 0 20 20"><path d="M2 2l16 16M18 2L2 18" stroke="#8c7d52" stroke-width="2.600" stroke-linecap="round"/></svg>
  <div class="abs" style="left:13px;top:1121px;width:470px;height:116px;border:1px solid #d9ccaa;border-radius:7px"></div>
  <div class="abs" style="left:27px;top:1136px;font-size:26px;line-height:30px;color:#565a50">Filters</div>
  <div class="lnk" style="left:28px;top:1187px">Add Condition</div>
  <div class="lnk" style="left:193px;top:1187px">Add Group</div>
  <div class="lbl y" style="top:1271px">Order By</div>
  <div class="abs" style="left:13px;top:1301px;width:470px;height:50px;border:1px solid #7b7051;border-radius:7px;text-align:center;font-size:21.300px;line-height:50px;color:#3080a4">Add Order By</div>
  <div class="lbl y" style="top:1414px">Additional fields</div>
  <div class="info" style="left:166px;top:1416px;background:#8a7c55;color:#ffedc2">i</div>
  <div class="inp y" style="top:1444px;line-height:53px;color:#9a936f">Search...</div>
  <svg class="abs" style="left:442px;top:1458px" width="25" height="25" viewBox="0 0 25 25"><circle cx="10" cy="10" r="7.600" fill="none" stroke="#8a7c55" stroke-width="2.800"/><path d="M15.600 15.600l7 7" stroke="#8a7c55" stroke-width="3" stroke-linecap="round"/></svg>
  <div class="hr" style="top:1540px;background:#e3d8b8;height:1px"></div>

  <svg class="chev" style="top:1574px" width="22" height="14" viewBox="0 0 22 14"><path d="M2 2l9 9.500L20 2" fill="none" stroke="#032d60" stroke-width="3" stroke-linecap="round" stroke-linejoin="round"/></svg>
  <div class="sec" style="top:1567px">Data Mappings</div>
</div>
<!-- cursor -->
<svg class="abs" style="left:2866px;top:1035px;transform:rotate(-11deg);transform-origin:60% 70%;filter:drop-shadow(0 1.500px 1.500px rgba(60,40,0,.35))" width="34" height="38" viewBox="0 0 34 38"><path d="M9.500 3.500c0-1.700 1.200-2.700 2.600-2.700s2.600 1 2.600 2.700v10.500c.4-1 1.400-1.500 2.500-1.500 1.300 0 2.300.8 2.500 2 .5-.8 1.400-1.200 2.400-1.200 1.400 0 2.400.9 2.600 2.200.5-.5 1.200-.7 1.900-.7 1.500 0 2.600 1.100 2.600 2.800v7.400c0 2.800-.9 4.800-1.800 6.600v3H12.600v-2.600c-2-2.200-3.600-4.600-5.400-7.400L4 19.600c-.8-1.300-.5-2.700.6-3.400 1.100-.7 2.400-.4 3.300.7l1.600 2z" fill="#ffedc2" stroke="#4a3a10" stroke-width="1.800" stroke-linejoin="round"/><path d="M17 25v7M20.500 25v7M24 25v7" stroke="#4a3a10" stroke-width="1.600"/></svg>
</body>
</html>
